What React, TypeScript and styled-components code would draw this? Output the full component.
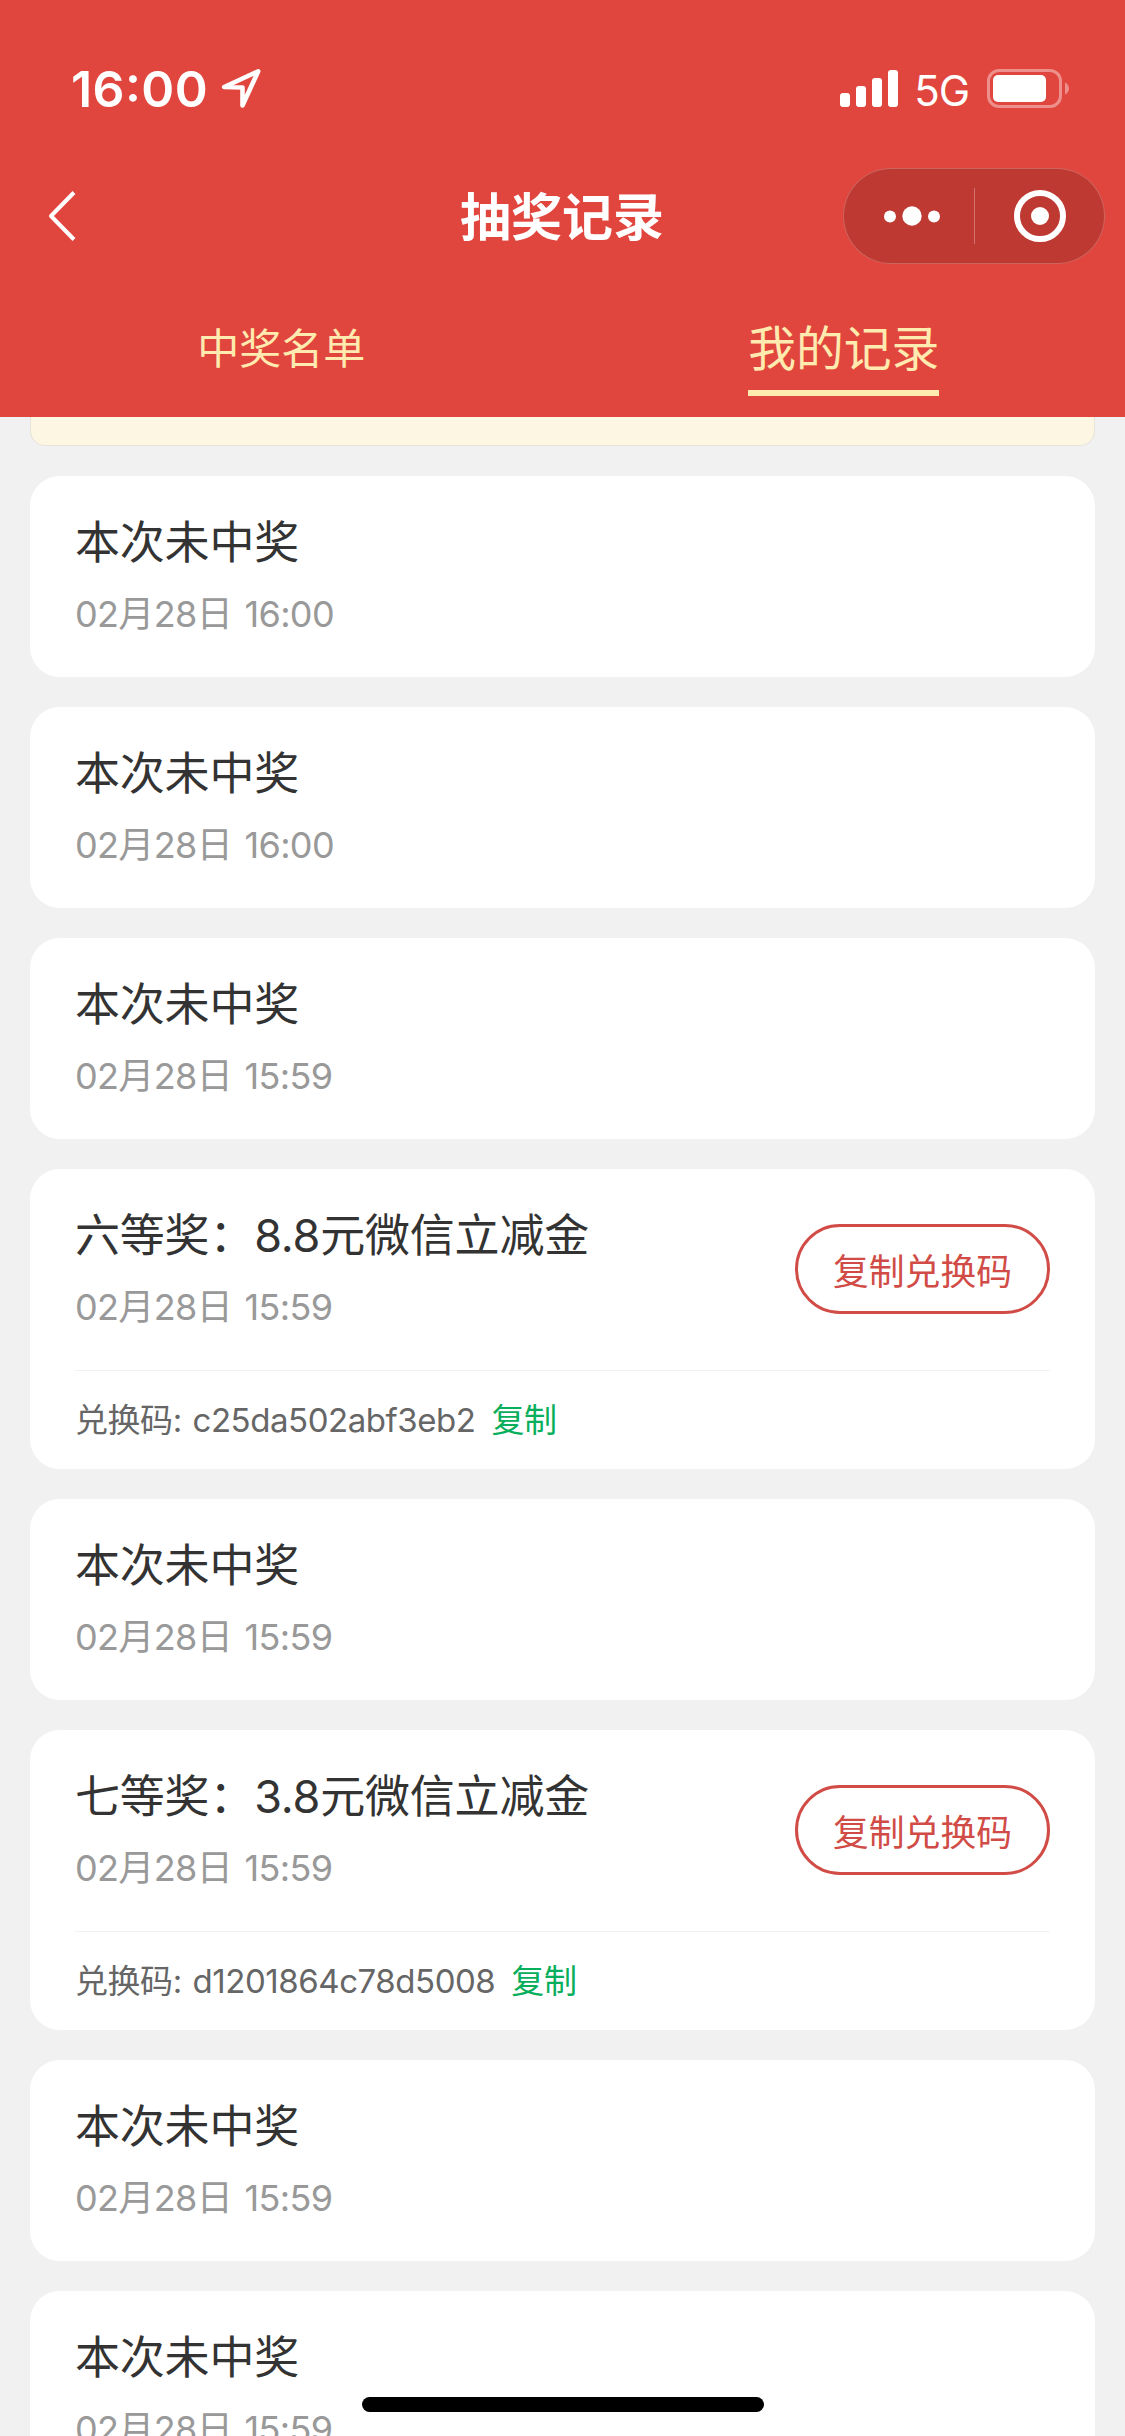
import React from "react";
import styled, { createGlobalStyle } from "styled-components";

const GlobalStyle = createGlobalStyle`
  * { box-sizing: border-box; }
  body { margin: 0; background: #f1f1f1; }
`;

const Screen = styled.div`
  width: 1125px;
  height: 2436px;
  overflow: hidden;
  position: relative;
  display: flex;
  flex-direction: column;
  background: #f1f1f1;
  font-family: Inter, "Noto Sans CJK SC", sans-serif;
  font-weight: 400;
  font-feature-settings: "calt" 0;
`;

const Header = styled.header`
  flex: none;
  height: 417px;
  background: #e1463e;
  display: flex;
  flex-direction: column;
`;

const StatusBar = styled.div`
  height: 132px;
  padding: 45px 55px 0 71px;
  display: flex;
  justify-content: space-between;
  align-items: flex-start;
  color: #fff;
`;

const StatusGroup = styled.div`
  display: flex;
  align-items: center;
  height: 87px;
`;

const Clock = styled.span`
  width: 150px;
  font-size: 50px;
  line-height: 60px;
  font-weight: 600;
  letter-spacing: 0.4px;
  font-feature-settings: "calt" 1;
  white-space: nowrap;
`;

const Network = styled.span`
  margin: 4px 18px 0 16px;
  font-size: 42px;
  line-height: 50px;
  letter-spacing: -1px;
`;

const NavBar = styled.div`
  height: 168px;
  padding: 0 20px 0 48px;
  display: grid;
  grid-template-columns: 262px 1fr 262px;
  align-items: center;
`;

const NavTitle = styled.h1`
  margin: 0;
  padding: 4px 29px 0 0;
  text-align: center;
  color: #fff;
  font-size: 51px;
  line-height: 60px;
  font-weight: 600;
`;

const Capsule = styled.div`
  height: 96px;
  border: 1px solid rgba(255, 255, 255, 0.22);
  border-radius: 48px;
  background: #be3931;
  display: grid;
  grid-template-columns: 130px 1fr;
  align-items: center;
`;

const CapsuleButton = styled.button`
  height: 56px;
  padding: 0 0 0 6px;
  border: 0;
  background: none;
  display: flex;
  align-items: center;
  justify-content: center;
  & + & {
    padding: 0;
    border-left: 1px solid rgba(255, 255, 255, 0.3);
  }
`;

const Tabs = styled.nav`
  flex: 1;
  display: grid;
  grid-template-columns: 1fr 1fr;
  justify-items: center;
  align-items: start;
`;

const Tab = styled.span<{ $active?: boolean }>`
  height: 96px;
  color: #ffeab0;
  font-size: ${(p) => (p.$active ? "47.8px" : "42px")};
  line-height: ${(p) => (p.$active ? "99px" : "98px")};
  border-bottom: ${(p) => (p.$active ? "6px solid #ffeab0" : "0")};
`;

const List = styled.main`
  padding: 0 30px;
  display: flex;
  flex-direction: column;
  gap: 30px;
`;

const Notice = styled.div`
  flex: none;
  height: 29px;
  border: 1px solid #e6e3d8;
  border-top: 0;
  border-radius: 0 0 15px 15px;
  background: #fcf6e3;
`;

const Card = styled.article`
  flex: none;
  padding: 0 45px;
  border-radius: 30px;
  background: #fff;
`;

const CardMain = styled.div`
  height: 201px;
  display: flex;
  justify-content: space-between;
`;

const CardText = styled.div`
  padding-top: 37px;
`;

const Prize = styled.div`
  color: #333;
  font-size: 45px;
  line-height: 60px;
  letter-spacing: -0.2px;
  white-space: nowrap;
`;

const DateLine = styled.div`
  margin-top: 15px;
  color: #999;
  font-size: 36px;
  line-height: 52px;
  letter-spacing: -0.65px;
  word-spacing: 3px;
  white-space: nowrap;
`;

const CopyButton = styled.button`
  width: 255px;
  height: 90px;
  margin-top: 55px;
  padding: 5px 0 0;
  border: 3px solid #d14c46;
  border-radius: 45px;
  background: #fff;
  color: #d14c46;
  font: inherit;
  font-size: 35.8px;
  line-height: 52px;
`;

const CodeRow = styled.div`
  height: 99px;
  border-top: 1px solid #f2f2f2;
  display: flex;
  align-items: center;
  gap: 16px;
  color: #666;
  font-size: 33px;
  line-height: 48px;
  letter-spacing: -0.45px;
  word-spacing: 2px;
  white-space: nowrap;
`;

const CopyLink = styled.span`
  color: #07ae5b;
`;

const HomeIndicator = styled.div`
  position: absolute;
  left: 362px;
  top: 2397px;
  width: 402px;
  height: 15px;
  border-radius: 8px;
  background: #000;
`;

interface DrawRecord {
  prize: string;
  date: string;
  code?: string;
}

const MISS = "本次未中奖";

const records: DrawRecord[] = [
  { prize: MISS, date: "02月28日 16:00" },
  { prize: MISS, date: "02月28日 16:00" },
  { prize: MISS, date: "02月28日 15:59" },
  { prize: "六等奖：8.8元微信立减金", date: "02月28日 15:59", code: "c25da502abf3eb2" },
  { prize: MISS, date: "02月28日 15:59" },
  { prize: "七等奖：3.8元微信立减金", date: "02月28日 15:59", code: "d1201864c78d5008" },
  { prize: MISS, date: "02月28日 15:59" },
  { prize: MISS, date: "02月28日 15:59" },
];

const LocationIcon = () => (
  <svg width="42" height="42" viewBox="0 0 42 42" fill="none">
    <path d="M37.2 3.3 L3.2 19 L21.5 19.5 L21.5 37.5 Z" stroke="#fff" strokeWidth="4.6" strokeLinejoin="round" />
  </svg>
);

const SignalIcon = () => (
  <svg width="58" height="37" viewBox="0 0 58 37" fill="#fff">
    <rect x="0" y="23" width="10" height="14" rx="3" />
    <rect x="16" y="16" width="10" height="21" rx="3" />
    <rect x="32" y="8" width="10" height="29" rx="3" />
    <rect x="48" y="0" width="10" height="37" rx="3" />
  </svg>
);

const BatteryIcon = () => (
  <svg width="83" height="39" viewBox="0 0 83 39">
    <rect x="1.5" y="1.5" width="72" height="36" rx="10.5" fill="none" stroke="#fff" strokeOpacity="0.4" strokeWidth="3" />
    <rect x="6" y="6" width="53" height="27" rx="5" fill="#fff" />
    <path d="M78 13.5 C80.5 14.5 82 17 82 19.5 C82 22 80.5 24.5 78 25.5 Z" fill="#fff" fillOpacity="0.4" />
  </svg>
);

const BackIcon = () => (
  <svg width="28" height="52" viewBox="0 0 28 52" fill="none">
    <path d="M26 2.5 L3 26 L26 49.5" stroke="#fff" strokeWidth="4" strokeLinejoin="round" />
  </svg>
);

const MoreIcon = () => (
  <svg width="56" height="20" viewBox="0 0 56 20" fill="#fff">
    <circle cx="6" cy="10.5" r="6" />
    <circle cx="28" cy="10" r="9.7" />
    <circle cx="50" cy="10.5" r="6" />
  </svg>
);

const CloseIcon = () => (
  <svg width="52" height="52" viewBox="0 0 52 52">
    <circle cx="26" cy="26" r="23" fill="none" stroke="#fff" strokeWidth="6" />
    <circle cx="26" cy="26" r="9" fill="#fff" />
  </svg>
);

const RecordCard = ({ prize, date, code }: DrawRecord) => (
  <Card>
    <CardMain>
      <CardText>
        <Prize>{prize}</Prize>
        <DateLine>{date}</DateLine>
      </CardText>
      {code && <CopyButton>复制兑换码</CopyButton>}
    </CardMain>
    {code && (
      <CodeRow>
        <span>兑换码: {code}</span>
        <CopyLink>复制</CopyLink>
      </CodeRow>
    )}
  </Card>
);

export default function App() {
  return (
    <Screen>
      <GlobalStyle />
      <Header>
        <StatusBar>
          <StatusGroup>
            <Clock>16:00</Clock>
            <LocationIcon />
          </StatusGroup>
          <StatusGroup>
            <SignalIcon />
            <Network>5G</Network>
            <BatteryIcon />
          </StatusGroup>
        </StatusBar>
        <NavBar>
          <BackIcon />
          <NavTitle>抽奖记录</NavTitle>
          <Capsule>
            <CapsuleButton><MoreIcon /></CapsuleButton>
            <CapsuleButton><CloseIcon /></CapsuleButton>
          </Capsule>
        </NavBar>
        <Tabs>
          <Tab>中奖名单</Tab>
          <Tab $active>我的记录</Tab>
        </Tabs>
      </Header>
      <List>
        <Notice />
        {records.map((record, i) => (
          <RecordCard key={i} {...record} />
        ))}
      </List>
      <HomeIndicator />
    </Screen>
  );
}
